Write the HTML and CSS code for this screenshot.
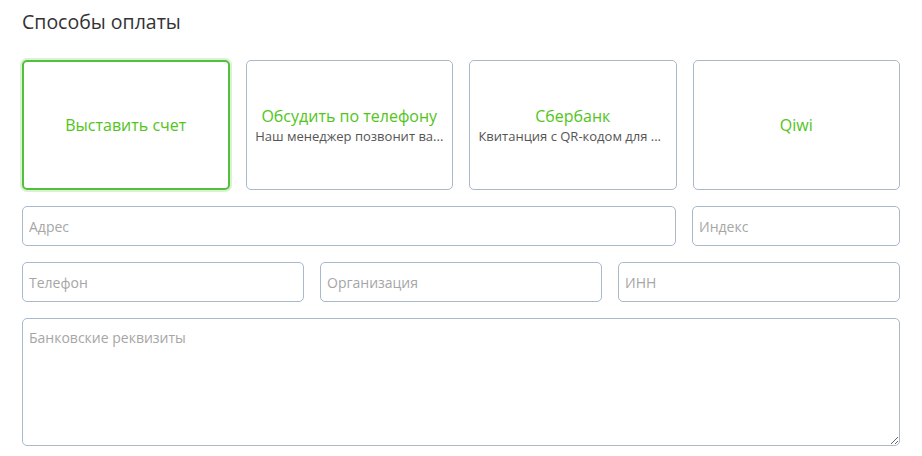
FILE: index.html
```html
<!DOCTYPE html>
<html lang="ru">
<head>
<meta charset="utf-8">
<link rel="stylesheet" href="styles.css">
</head>
<body>
<div class="page">
  <h2 class="title">Способы оплаты</h2>
  <div class="methods">
    <div class="method active"><div class="m-name">Выставить счет</div></div>
    <div class="method"><div class="m-name">Обсудить по телефону</div><div class="m-desc">Наш менеджер позвонит ва...</div></div>
    <div class="method"><div class="m-name">Сбербанк</div><div class="m-desc shift">Квитанция с QR-кодом для ...</div></div>
    <div class="method"><div class="m-name">Qiwi</div></div>
  </div>
  <div class="row row-addr">
    <input class="field" placeholder="Адрес">
    <input class="field" placeholder="Индекс">
  </div>
  <div class="row row-three">
    <input class="field" placeholder="Телефон">
    <input class="field" placeholder="Организация">
    <input class="field" placeholder="ИНН">
  </div>
  <textarea class="field area" placeholder="Банковские реквизиты"></textarea>
</div>
</body>
</html>
```
FILE: styles.css
```css
* { box-sizing: border-box; }
body {
  margin: 0;
  font-family: "Open Sans", sans-serif;
  background: #fff;
  color: #333;
}
.page {
  padding: 8px 22px 0 22px;
  width: 922px;
  display: flex;
  flex-direction: column;
  gap: 16px;
}
.title {
  margin: 0 0 8px 0;
  font-size: 19.5px;
  font-weight: 400;
  line-height: 28px;
  color: #333;
}
.methods {
  display: grid;
  grid-template-columns: repeat(4, 1fr);
  gap: 16px;
}
.method {
  height: 130px;
  border: 1px solid #a9b9cc;
  border-radius: 5px;
  display: flex;
  flex-direction: column;
  align-items: center;
  justify-content: center;
  padding: 0 6px;
  min-width: 0;
}
.method.active {
  border: 2px solid #52c03a;
  box-shadow: 0 0 0 2px #d9f2d2;
}
.m-name {
  color: #52c41a;
  font-size: 16px;
  line-height: 21px;
  white-space: nowrap;
}
.m-desc {
  font-size: 13px;
  line-height: 18px;
  color: #555;
  white-space: nowrap;
}
.m-desc.shift { margin-right: 6px; }
.row {
  display: grid;
  gap: 16px;
}
.row-addr { grid-template-columns: 1fr 208px; }
.row-three { grid-template-columns: repeat(3, 1fr); }
.field {
  height: 40px;
  border: 1px solid #a9b9cc;
  border-radius: 5px;
  padding: 0 6px;
  font-family: "Open Sans", sans-serif;
  font-size: 14px;
  color: #333;
  background: #fff;
  outline: none;
  min-width: 0;
  width: 100%;
}
.field::placeholder { color: #a6a6a6; }
.area {
  height: 128px;
  padding: 9px 6px;
  resize: vertical;
  display: block;
}
```
